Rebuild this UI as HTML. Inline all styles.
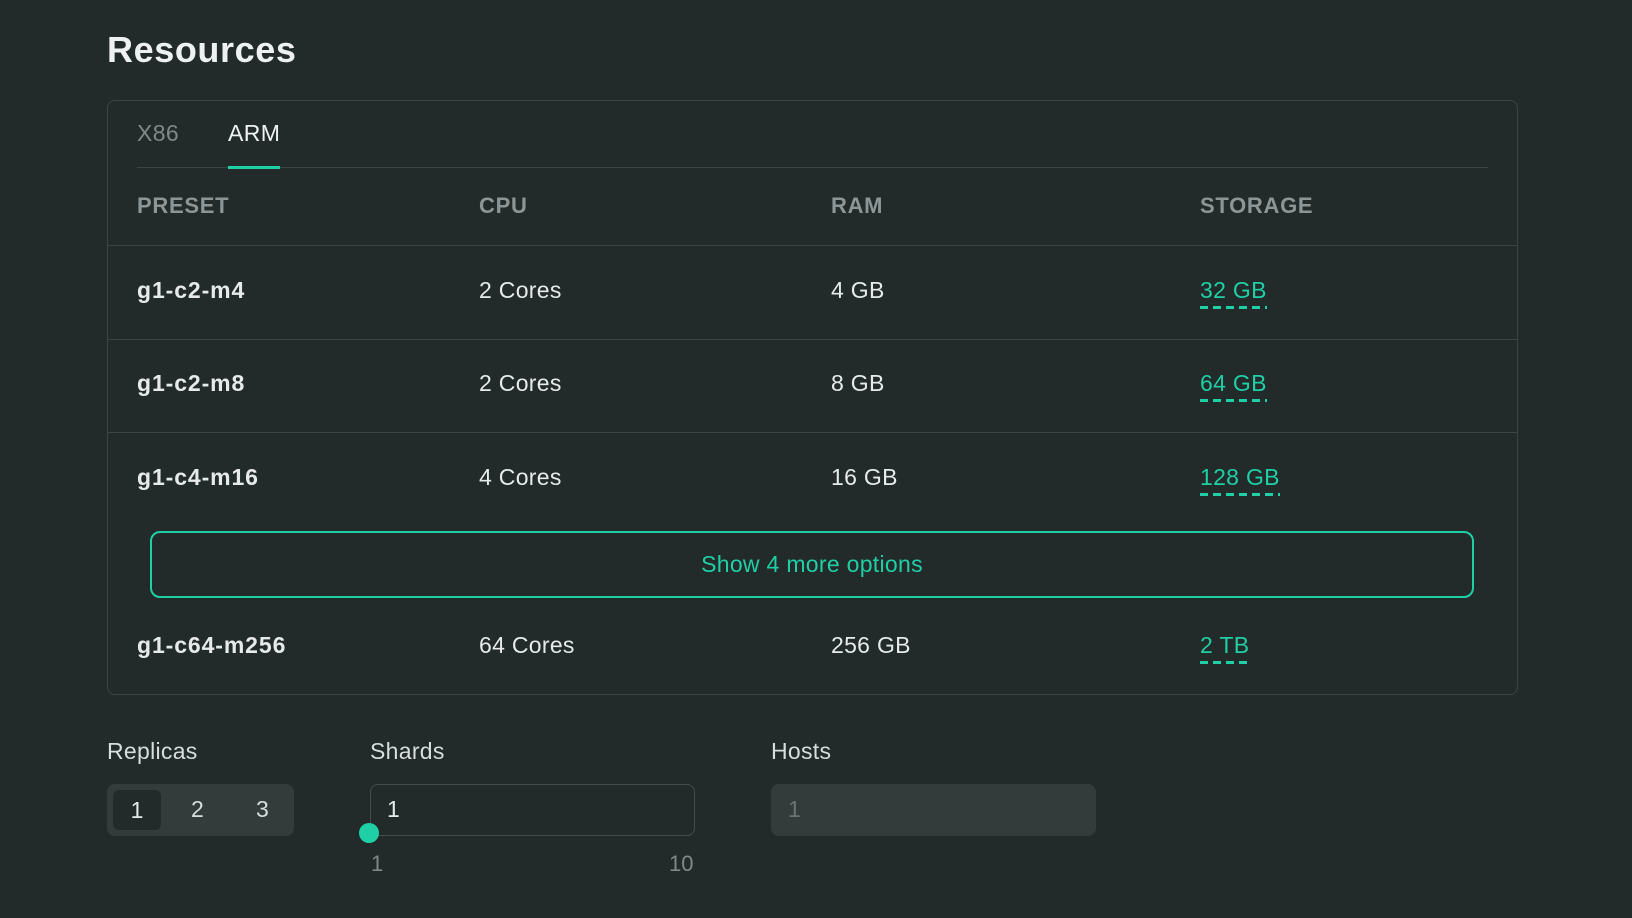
<!DOCTYPE html>
<html><head><style>
*{box-sizing:border-box;margin:0;padding:0}
body{width:1632px;height:918px;background:#232a2a;font-family:"Liberation Sans",sans-serif;color:#e6eaea;position:relative;overflow:hidden}
.a{position:absolute;white-space:nowrap}
h1{position:absolute;left:107px;top:29px;font-size:36px;font-weight:bold;color:#eef1f1;letter-spacing:0.6px}
.card{position:absolute;left:107px;top:100px;width:1411px;height:595px;border:1px solid #3c4545;border-radius:8px}
.hd{font-size:22px;font-weight:bold;color:#8c9696;letter-spacing:0.7px}
.cell{font-size:23px;color:#e6eaea;letter-spacing:0.3px}
.b{font-weight:bold;letter-spacing:0.9px}
.st{color:#1fcfa6;padding-bottom:5px;background:linear-gradient(90deg,#1fcfa6 0 8px,transparent 8px 13px) repeat-x left bottom/13px 3px}
.line{position:absolute;height:1px;background:#3c4545}
</style></head><body>
<h1>Resources</h1>
<div class="card"></div>
<div class="a" style="left:137px;top:120px;font-size:23px;color:#7f8989;letter-spacing:0.4px">X86</div>
<div class="a" style="left:228px;top:120px;font-size:23px;color:#eef1f1;letter-spacing:0.4px">ARM</div>
<div class="line" style="left:137px;top:167px;width:1351px"></div>
<div class="a" style="left:228px;top:166px;width:52px;height:3px;background:#1fcfa6"></div>
<div class="a hd" style="left:137px;top:193px">PRESET</div>
<div class="a hd" style="left:479px;top:193px">CPU</div>
<div class="a hd" style="left:831px;top:193px">RAM</div>
<div class="a hd" style="left:1200px;top:193px">STORAGE</div>
<div class="line" style="left:108px;top:245px;width:1409px"></div>

<div class="a cell b" style="left:137px;top:277px">g1-c2-m4</div>
<div class="a cell" style="left:479px;top:277px">2 Cores</div>
<div class="a cell" style="left:831px;top:277px">4 GB</div>
<div class="a cell st" style="left:1200px;top:277px">32 GB</div>
<div class="line" style="left:108px;top:339px;width:1409px"></div>

<div class="a cell b" style="left:137px;top:370px">g1-c2-m8</div>
<div class="a cell" style="left:479px;top:370px">2 Cores</div>
<div class="a cell" style="left:831px;top:370px">8 GB</div>
<div class="a cell st" style="left:1200px;top:370px">64 GB</div>
<div class="line" style="left:108px;top:432px;width:1409px"></div>

<div class="a cell b" style="left:137px;top:464px">g1-c4-m16</div>
<div class="a cell" style="left:479px;top:464px">4 Cores</div>
<div class="a cell" style="left:831px;top:464px">16 GB</div>
<div class="a cell st" style="left:1200px;top:464px">128 GB</div>

<div class="a" style="left:150px;top:531px;width:1324px;height:67px;border:2px solid #1fcfa6;border-radius:10px;text-align:center;line-height:63px;font-size:23px;color:#1fcfa6;letter-spacing:0.3px">Show 4 more options</div>

<div class="a cell b" style="left:137px;top:632px">g1-c64-m256</div>
<div class="a cell" style="left:479px;top:632px">64 Cores</div>
<div class="a cell" style="left:831px;top:632px">256 GB</div>
<div class="a cell st" style="left:1200px;top:632px">2 TB</div>

<div class="a" style="left:107px;top:738px;font-size:23px;color:#d8dddd;letter-spacing:0.3px">Replicas</div>
<div class="a" style="left:370px;top:738px;font-size:23px;color:#d8dddd;letter-spacing:0.3px">Shards</div>
<div class="a" style="left:771px;top:738px;font-size:23px;color:#d8dddd;letter-spacing:0.3px">Hosts</div>

<div class="a" style="left:107px;top:784px;width:187px;height:52px;background:#343b3b;border-radius:8px"></div>
<div class="a" style="left:113px;top:790px;width:48px;height:40px;background:#232a2a;border-radius:6px;text-align:center;line-height:40px;font-size:23px">1</div>
<div class="a" style="left:191px;top:789px;font-size:23px;line-height:40px;color:#d8dddd">2</div>
<div class="a" style="left:256px;top:789px;font-size:23px;line-height:40px;color:#d8dddd">3</div>

<div class="a" style="left:370px;top:784px;width:325px;height:52px;border:1px solid #444d4d;border-radius:8px;padding-left:16px;line-height:48px;font-size:23px">1</div>
<div class="a" style="left:359px;top:823px;width:20px;height:20px;border-radius:50%;background:#1fcfa6"></div>
<div class="a" style="left:371px;top:851px;font-size:22px;color:#7f8989">1</div>
<div class="a" style="left:669px;top:851px;font-size:22px;color:#7f8989">10</div>

<div class="a" style="left:771px;top:784px;width:325px;height:52px;background:#343b3b;border-radius:8px;padding-left:17px;line-height:50px;font-size:23px;color:#6a7474">1</div>
</body></html>
